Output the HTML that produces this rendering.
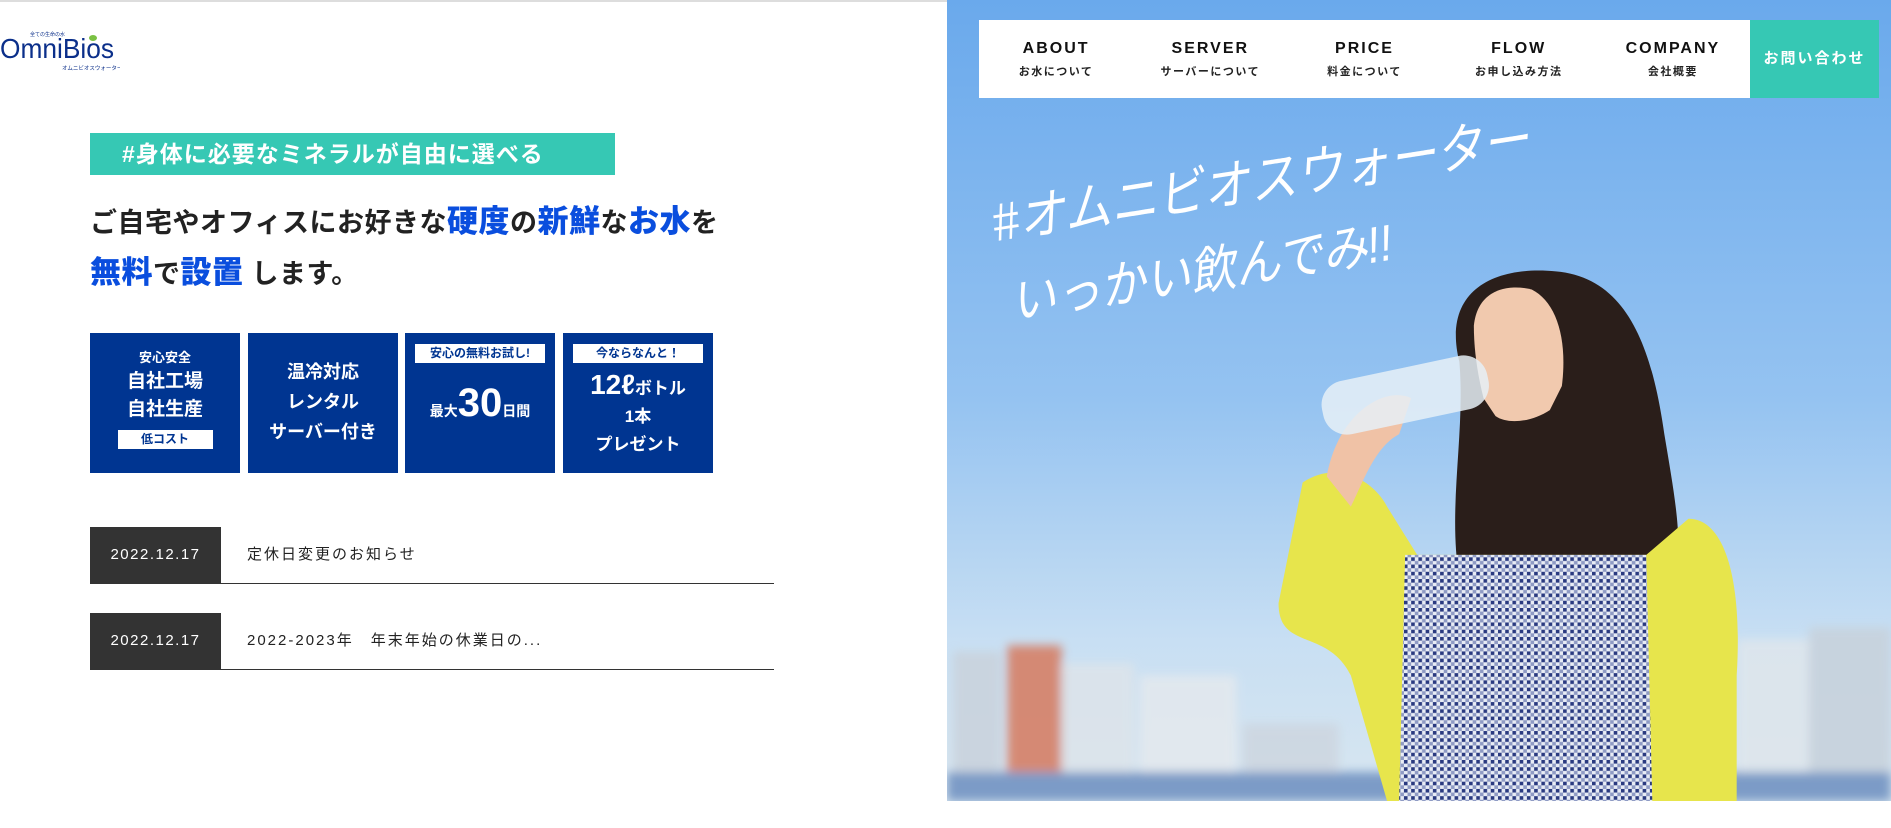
<!DOCTYPE html>
<html><head><meta charset="utf-8"><style>
*{margin:0;padding:0;box-sizing:border-box}
body{width:1891px;height:828px;background:#fff;position:relative;overflow:hidden;font-family:"Liberation Sans","Noto Sans CJK JP",sans-serif;color:#222}
.abs{position:absolute}
.topline{left:0;top:0;width:947px;height:2px;background:#ddd}
.logo{left:0;top:28px;width:120px;height:50px}
.badge{left:90px;top:133px;width:525px;height:42px;background:#36c8b4;color:#fff;font-weight:bold;font-size:23px;line-height:42px;padding-left:32px;letter-spacing:1px}
.h1{left:90px;top:197px;font-size:27px;font-weight:bold;letter-spacing:0.5px;line-height:50px;color:#222}
.h1 b{color:#0a4ede;font-size:31px}
.box{top:333px;width:150px;height:140px;background:#003591;color:#fff;text-align:center;font-weight:bold}
.tag{background:#fff;color:#003591;font-size:12px;height:19px;line-height:19px;margin:0 auto}
.news{left:90px;width:684px;height:57px;border-bottom:1.5px solid #333}
.date{position:absolute;left:0;top:0;width:131px;height:56px;background:#333;color:#fff;font-size:15px;letter-spacing:1.5px;line-height:56px;text-align:center}
.ntxt{position:absolute;left:157px;top:0;line-height:56px;font-size:15px;letter-spacing:2px;color:#222}
.hero{left:947px;top:0;width:944px;height:801px;overflow:hidden}
.nav{left:979px;top:20px;width:771px;height:78px;background:#fff;display:flex}
.nav div{flex:1;text-align:center;font-weight:bold}
.nav .en{font-size:16px;letter-spacing:2px;margin-top:20px;color:#111}
.nav .jp{font-size:11px;letter-spacing:1.5px;margin-top:5px;color:#222}
.cta{left:1750px;top:20px;width:129px;height:78px;background:#36c8b4;color:#fff;font-weight:bold;font-size:15px;letter-spacing:2px;line-height:78px;text-align:center}
</style></head><body>
<div class="abs topline"></div>
<svg class="abs logo" viewBox="0 0 120 50">
<text x="0" y="30" font-family="Liberation Sans Narrow,Liberation Sans,sans-serif" font-size="28" fill="#0b2f8a" textLength="114" lengthAdjust="spacingAndGlyphs">OmniBios</text>
<text x="30" y="8" font-size="5" fill="#0b2f8a">全ての生命の水</text>
<ellipse cx="93" cy="10" rx="4" ry="3" fill="#7ac143"/>
<text x="62" y="42" font-size="5.5" fill="#0b2f8a">オムニビオスウォーター</text>
</svg>
<div class="abs badge">#身体に必要なミネラルが自由に選べる</div>
<div class="abs h1">ご自宅やオフィスにお好きな<b>硬度</b>の<b>新鮮</b>な<b>お水</b>を<br><b>無料</b>で<b>設置</b> します。</div>

<div class="abs box" style="left:90px"><div style="font-size:13px;margin-top:14px">安心安全</div><div style="font-size:19px;line-height:28px;margin-top:2px">自社工場<br>自社生産</div><div class="tag" style="width:95px;margin-top:6px">低コスト</div></div>
<div class="abs box" style="left:248px"><div style="font-size:18px;line-height:30px;margin-top:24px">温冷対応<br>レンタル<br>サーバー付き</div></div>
<div class="abs box" style="left:405px"><div class="tag" style="width:130px;margin-top:11px">安心の無料お試し!</div><div style="margin-top:18px;font-size:14px">最大<span style="font-size:40px">30</span>日間</div></div>
<div class="abs box" style="left:563px"><div class="tag" style="width:130px;margin-top:11px">今ならなんと！</div><div style="font-size:17px;line-height:28px;margin-top:8px"><span style="font-size:28px">12ℓ</span>ボトル<br>1本<br>プレゼント</div></div>

<div class="abs news" style="top:527px"><div class="date">2022.12.17</div><div class="ntxt">定休日変更のお知らせ</div></div>
<div class="abs news" style="top:613px"><div class="date">2022.12.17</div><div class="ntxt">2022-2023年　年末年始の休業日の...</div></div>

<svg class="abs hero" viewBox="785 0 783 664" preserveAspectRatio="none">
<defs>
<linearGradient id="sky" x1="0" y1="0" x2="0" y2="1"><stop offset="0" stop-color="#6aa9ec"/><stop offset="0.5" stop-color="#95c3f1"/><stop offset="0.8" stop-color="#c8dff3"/><stop offset="1" stop-color="#d8e6f0"/></linearGradient>
<pattern id="chk" width="6" height="6" patternUnits="userSpaceOnUse"><rect width="6" height="6" fill="#e8ecf5"/><rect width="3" height="3" fill="#2a3a80"/><rect x="3" y="3" width="3" height="3" fill="#8e9ac4"/></pattern>
<filter id="bl"><feGaussianBlur stdDeviation="4"/></filter>
</defs>
<rect x="785" y="0" width="783" height="664" fill="url(#sky)"/>
<g filter="url(#bl)" opacity="0.85">
<rect x="790" y="540" width="40" height="110" fill="#c9d2dc"/>
<rect x="835" y="535" width="45" height="115" fill="#d67a5e"/>
<rect x="880" y="550" width="60" height="100" fill="#dde4ea"/>
<rect x="945" y="560" width="80" height="90" fill="#e4e9ee"/>
<rect x="1030" y="600" width="80" height="50" fill="#cdd6e0"/>
<rect x="1440" y="530" width="60" height="120" fill="#dfe6ec"/>
<rect x="1500" y="520" width="68" height="130" fill="#c7d1db"/>
<rect x="785" y="640" width="783" height="24" fill="#6d8fc0"/>
</g>
<path d="M1210 300 C1195 240 1240 220 1290 225 C1350 230 1370 290 1380 360 C1390 420 1400 470 1380 490 L1210 480 C1200 420 1215 360 1210 300Z" fill="#2a1e1a"/>
<path d="M1222 270 C1225 240 1250 235 1270 240 C1290 250 1300 280 1295 320 L1285 340 C1270 350 1250 352 1240 345 L1230 330 C1225 310 1222 290 1222 270Z" fill="#f1c9ae"/>
<path d="M1080 400 C1110 380 1140 400 1150 420 L1175 460 L1365 460 L1400 430 C1430 430 1445 480 1440 560 L1440 664 L1150 664 L1120 560 C1100 520 1060 540 1060 500Z" fill="#e7e54c"/>
<path d="M1165 460 L1365 460 L1370 664 L1160 664Z" fill="url(#chk)"/>
<path d="M1100 395 C1110 340 1150 320 1170 330 L1160 360 C1140 370 1130 400 1120 420Z" fill="#f0c2a6"/>
<rect x="1095" y="305" width="140" height="45" rx="20" fill="#e6f0f7" opacity="0.85" transform="rotate(-12 1165 327)"/>
<g fill="#fff" font-family="Liberation Sans,Noto Sans CJK JP,sans-serif" font-style="italic">
<text x="0" y="0" font-size="44" transform="translate(825 200) rotate(-9)" textLength="450" lengthAdjust="spacingAndGlyphs">#オムニビオスウォーター</text>
<text x="0" y="0" font-size="42" transform="translate(840 265) rotate(-9)" textLength="320" lengthAdjust="spacingAndGlyphs">いっかい飲んでみ!!</text>
</g>
</svg>
<div class="abs nav">
<div><div class="en">ABOUT</div><div class="jp">お水について</div></div>
<div><div class="en">SERVER</div><div class="jp">サーバーについて</div></div>
<div><div class="en">PRICE</div><div class="jp">料金について</div></div>
<div><div class="en">FLOW</div><div class="jp">お申し込み方法</div></div>
<div><div class="en">COMPANY</div><div class="jp">会社概要</div></div>
</div>
<div class="abs cta">お問い合わせ</div>
</body></html>
